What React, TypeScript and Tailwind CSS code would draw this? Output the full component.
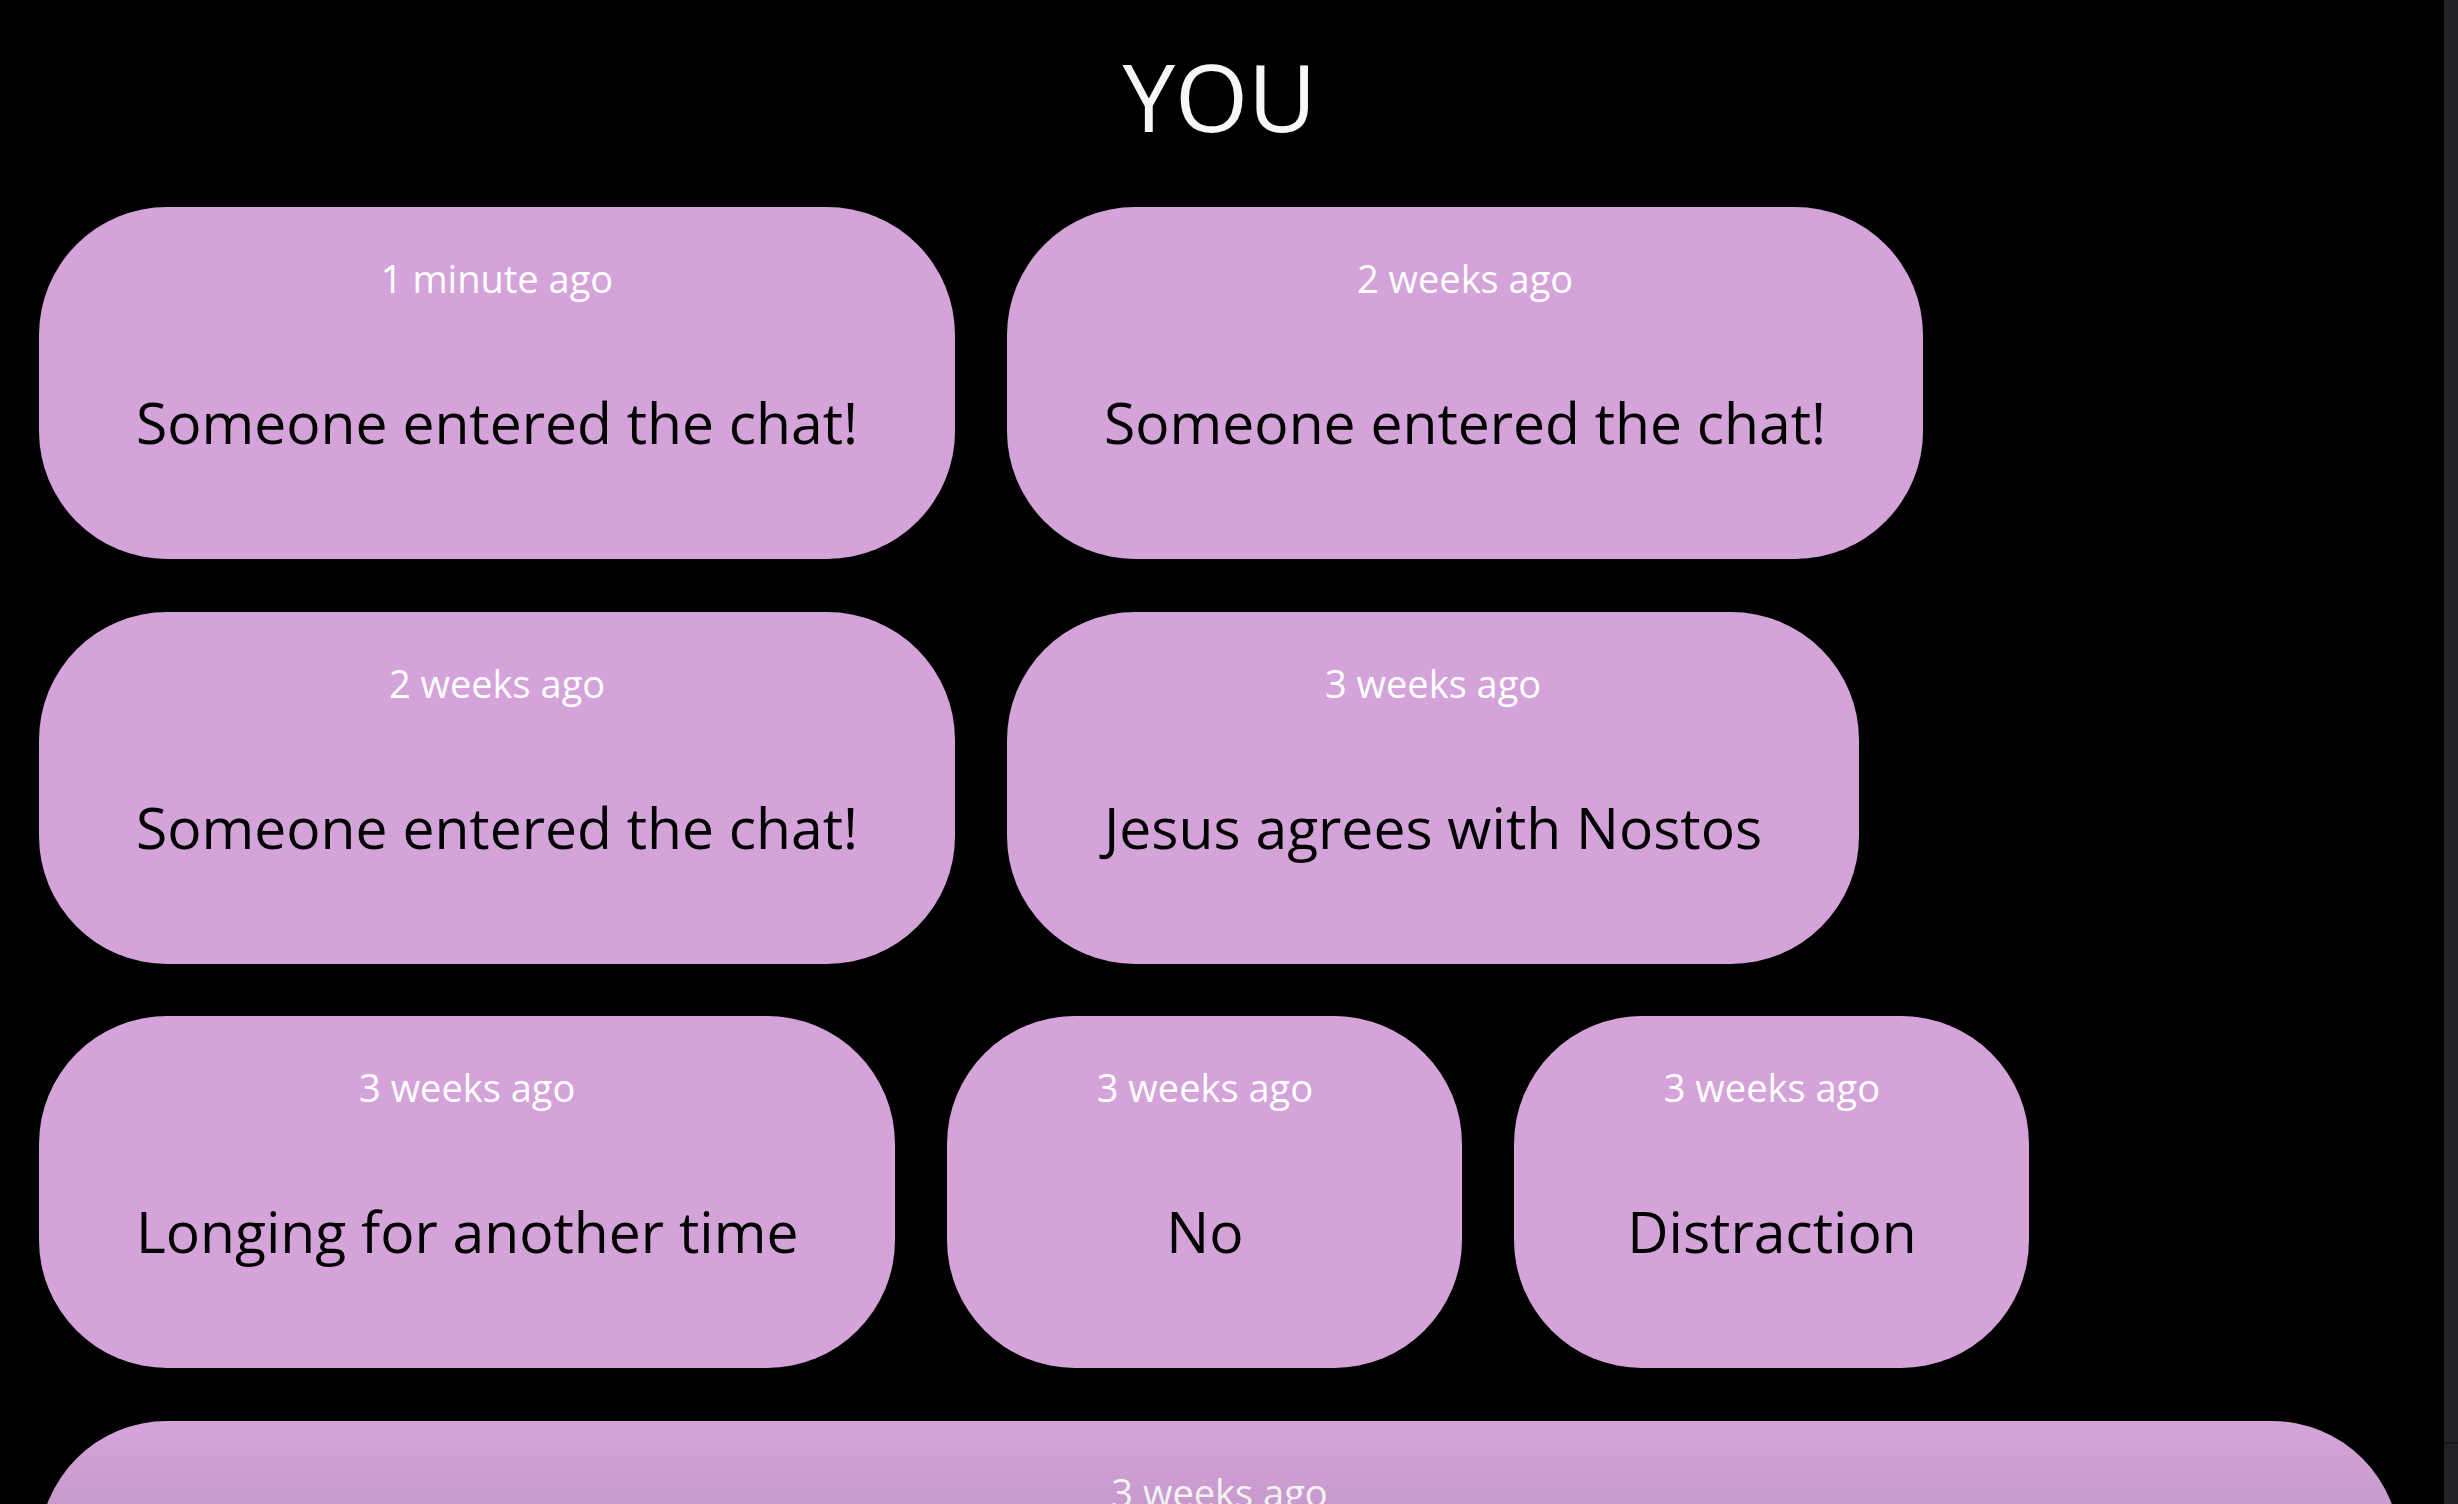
import React from 'react'

type Message = {
  time: string
  text: string
}

const messages: Message[] = [
  { time: '1 minute ago', text: 'Someone entered the chat!' },
  { time: '2 weeks ago', text: 'Someone entered the chat!' },
  { time: '2 weeks ago', text: 'Someone entered the chat!' },
  { time: '3 weeks ago', text: 'Jesus agrees with Nostos' },
  { time: '3 weeks ago', text: 'Longing for another time' },
  { time: '3 weeks ago', text: 'No' },
  { time: '3 weeks ago', text: 'Distraction' },
  {
    time: '3 weeks ago',
    text: 'Sometimes I wonder whether any of the people who wander through here ever stop to read what the others have left behind, or whether we are all just talking into the same quiet room',
  },
]

const font = { fontFamily: '"Open Sans", "Liberation Sans", sans-serif' }

const MessageCard: React.FC<Message> = ({ time, text }) => {
  return (
    <div className="flex h-[352px] min-w-[515px] max-w-full flex-none flex-col items-center rounded-[128px] bg-[#d4a3d9] px-[97px] pt-[52px]">
      <span className="text-[38px] leading-none text-white">{time}</span>
      <p className="mt-[97px] text-center text-[57px] leading-none text-black">{text}</p>
    </div>
  )
}

export default function App() {
  return (
    <div className="flex h-screen w-full overflow-hidden bg-black" style={font}>
      <main className="relative flex-1 overflow-hidden">
        <div className="pl-[39px] pr-[44px] pt-[49px]">
          <h1 className="text-center text-[94px] leading-none font-normal text-[#f7f7f7]">YOU</h1>
          <div className="mt-[64px] flex flex-wrap gap-x-[52px] gap-y-[52.5px]">
            {messages.map((m, i) => (
              <MessageCard key={i} time={m.time} text={m.text} />
            ))}
          </div>
        </div>
        <div className="pointer-events-none absolute inset-x-0 bottom-0 h-[70px] bg-linear-to-b from-transparent to-black/[0.06]" />
      </main>

      {/* scrollbar gutter */}
      <aside className="flex w-[14px] flex-col justify-end bg-[#222327]">
        <div className="mb-[60px] h-[2px] bg-[#17181b]" />
      </aside>
    </div>
  )
}
